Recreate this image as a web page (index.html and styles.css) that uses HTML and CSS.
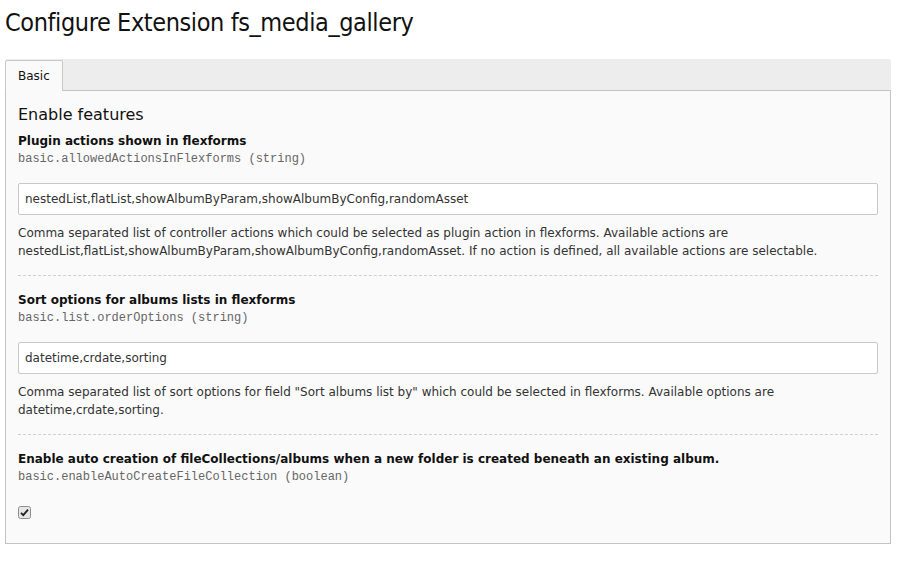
FILE: index.html
```html
<!DOCTYPE html>
<html>
<head>
<meta charset="utf-8">
<link rel="stylesheet" href="styles.css">
</head>
<body>
<h1 class="title">Configure Extension fs_media_gallery</h1>
<div class="tabs">
  <div class="tabbar"><div class="tab">Basic</div></div>
  <div class="panel">
    <h2 class="section">Enable features</h2>
    <div class="item">
      <div class="label">Plugin actions shown in flexforms</div>
      <div class="key">basic.allowedActionsInFlexforms (string)</div>
      <div class="input">nestedList,flatList,showAlbumByParam,showAlbumByConfig,randomAsset</div>
      <div class="desc">Comma separated list of controller actions which could be selected as plugin action in flexforms. Available actions are nestedList,flatList,showAlbumByParam,showAlbumByConfig,randomAsset. If no action is defined, all available actions are selectable.</div>
    </div>
    <div class="item">
      <div class="label">Sort options for albums lists in flexforms</div>
      <div class="key">basic.list.orderOptions (string)</div>
      <div class="input">datetime,crdate,sorting</div>
      <div class="desc">Comma separated list of sort options for field "Sort albums list by" which could be selected in flexforms. Available options are datetime,crdate,sorting.</div>
    </div>
    <div class="item last">
      <div class="label">Enable auto creation of fileCollections/albums when a new folder is created beneath an existing album.</div>
      <div class="key">basic.enableAutoCreateFileCollection (boolean)</div>
      <div class="check"><svg width="13" height="13" viewBox="0 0 13 13"><rect x="0.5" y="0.5" width="12" height="12" rx="2" fill="#e6e6e6" stroke="#8f8f8f"/><path d="M3 6.8 L5.3 9.2 L10 3.6" fill="none" stroke="#222" stroke-width="1.8"/></svg></div>
    </div>
  </div>
</div>
</body>
</html>
```
FILE: styles.css
```css
html, body { margin: 0; padding: 0; background: #fff; }
body { padding: 0 15px 0 5px; font-family: "DejaVu Sans", Verdana, sans-serif; font-size: 12px; color: #333; }
.title { margin: 0; height: 59px; padding-top: 8px; box-sizing: border-box; font-family: "DejaVu Sans Condensed", "DejaVu Sans", sans-serif; font-weight: normal; font-size: 25px; line-height: 30px; color: #111; letter-spacing: -0.4px; }
.tabs { width: 886px; }
.tabbar { background: #ededed; border-radius: 3px 3px 0 0; height: 31px; display: flex; align-items: flex-end; }
.tab { background: #fafafa; border: 1px solid #c8c8c8; border-bottom: none; height: 31px; box-sizing: border-box; padding: 0 12px; line-height: 30px; font-size: 12px; color: #111; margin-bottom: -1px; position: relative; z-index: 1; border-radius: 2px 2px 0 0; }
.panel { background: #fafafa; border: 1px solid #c3c3c3; padding: 14px 12px 24px; }
.section { margin: 0 0 7px; font-size: 16px; font-weight: normal; line-height: 20px; color: #111; }
.item { border-bottom: 1px dashed #cfcfcf; padding-bottom: 15px; margin-bottom: 15px; }
.item.last { border-bottom: none; padding-bottom: 0; margin-bottom: 0; }
.label { font-weight: bold; line-height: 18px; color: #111; }
.key { font-family: "Liberation Mono", "Courier New", monospace; font-size: 12px; line-height: 18px; color: #666; }
.input { margin-top: 15px; height: 32px; box-sizing: border-box; background: #fff; border: 1px solid #c8c8c8; border-radius: 2px; padding: 0 6px; line-height: 30px; color: #333; }
.desc { margin-top: 9px; line-height: 18px; color: #333; }
.check { margin-top: 20px; height: 13px; }
.check svg { display: block; }
```
